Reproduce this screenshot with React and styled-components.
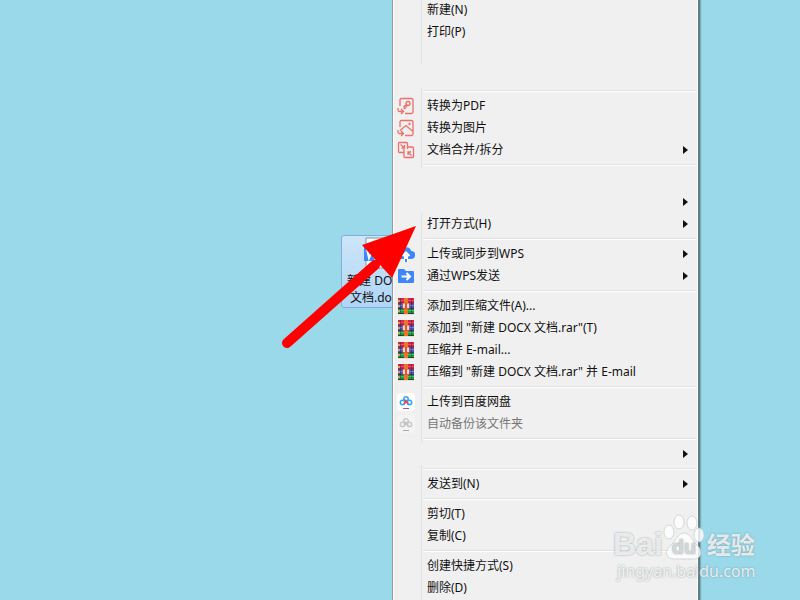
import React from 'react';
import styled, { createGlobalStyle } from 'styled-components';

const GlobalStyle = createGlobalStyle`
  body {
    margin: 0;
    font-family: 'Noto Sans', 'Noto Sans CJK SC', sans-serif;
    font-size: 12px;
    color: #111;
  }
`;
const Desktop = styled.main`
  position: relative;
  height: 100vh;
  overflow: hidden;
  background: #99d9ea;
`;
const DesktopFile = styled.button`
  position: absolute;
  left: 341px;
  top: 235px;
  width: 72px;
  display: flex;
  flex-direction: column;
  align-items: center;
  gap: 3px;
  padding: 1px 0;
  border: 1px solid #84acdd;
  border-radius: 3px;
  background: linear-gradient(#cde6f9, #b0d5f6);
  font: inherit;
  line-height: 17px;
  white-space: nowrap;
  color: #111;
`;
const Menu = styled.ul`
  position: absolute;
  left: 392px;
  top: -1px;
  width: 304px;
  margin: 0;
  padding: 0;
  list-style: none;
  background: #f0f0f0;
  border-left: 1px solid #979c9e;
  border-right: 1px solid #fff;
  box-shadow: inset 1px 0 0 #fafafa, 2px 0 0 #5f7f86, 3px 0 1px #7fa9b3;
`;
const Gutter = styled.span`
  flex: none;
  display: flex;
  align-items: center;
  width: 29px;
  padding-left: 4px;
  box-sizing: border-box;
  border-right: 1px solid ${props => (props.$plain ? 'transparent' : '#e2e3e3')};
`;
const Row = styled.button`
  display: flex;
  width: 100%;
  height: 22px;
  padding: 0;
  border: 0;
  background: none;
  font: inherit;
  line-height: 22px;
  text-align: left;
  color: ${props => (props.disabled ? '#777' : '#111')};
`;
const Label = styled.span`
  flex: 1;
  padding-left: 5px;
  white-space: nowrap;
`;
const Submenu = styled.svg`
  flex: none;
  align-self: center;
  width: 5px;
  height: 8px;
  margin-right: 9px;
`;
const Divider = styled.li`
  display: flex;
  height: 8px;
`;
const DividerLine = styled.span`
  flex: 1;
  align-self: center;
  height: 1px;
  margin: 0 1px;
  border-top: 1px solid #e0e0e0;
  background: #fff;
`;
const Icon = styled.svg`
  width: 18px;
  height: 18px;
`;
const Pointer = styled.svg`
  position: absolute;
  left: 270px;
  top: 210px;
`;
const Watermark = styled.div`
  position: absolute;
  left: 613px;
  top: 512px;
  color: rgba(255, 255, 255, 0.8);
  font-family: 'Liberation Sans', 'Noto Sans CJK SC', sans-serif;
  text-shadow: 0 0 2px rgba(120, 130, 135, 0.8);
`;
const Brand = styled.div`
  display: flex;
  align-items: flex-end;
  font-size: 32px;
  font-weight: bold;
  line-height: 32px;
`;
const Paw = styled.svg`
  width: 42px;
  height: 48px;
  overflow: visible;
`;
const BrandChinese = styled.span`
  font-size: 24px;
  line-height: 28px;
  padding-left: 2px;
`;
const Site = styled.div`
  padding-left: 4px;
  font-family: 'Noto Sans', sans-serif;
  font-size: 16px;
  line-height: 22px;
`;

const redLine = { fill: 'none', stroke: '#ee6f6a', strokeWidth: 1.3 };

const PdfIcon = () => (
  <Icon viewBox="0 0 18 18" {...redLine}>
    <path d="M3 9V3q0-1.500 1.500-1.500h10q1.500 0 1.500 1.500v12q0 1.500-1.500 1.500H8M1 11v2q0 1.500 1.500 1.500H6M4 12 6.500 14.500 4 17" />
    <circle cx="11" cy="6.500" r="2" />
    <path d="M9.500 8 9 10.500q-1 1.500-2 .5-.5-2 1.500-2.500l3-.2" />
  </Icon>
);
const ImageIcon = () => (
  <Icon viewBox="0 0 18 18" {...redLine}>
    <path d="M3 8V3q0-1.500 1.500-1.500h10q1.500 0 1.500 1.500v12q0 1.500-1.500 1.500H8M1 11v2q0 1.500 1.500 1.500H6M4 12 6.500 14.500 4 17M3 11.500 9 6.500l7 6" />
    <circle cx="12.500" cy="5" r=".5" />
  </Icon>
);
const MergeIcon = () => (
  <Icon viewBox="0 0 18 18" {...redLine}>
    <path d="M7 11.500H2.500Q1.500 11.500 1.500 10.500V2.500q0-1 1-1H9.500q1 0 1 1V6M10.500 6h5q1 0 1 1v8.500q0 1-1 1H8q-1 0-1-1V8M10.500 6V8M3.500 3.500l3.500 3M7.500 4v3H4.500M14.500 14.500l-3.500-3M11 14v-3h3" />
  </Icon>
);
const CloudIcon = () => (
  <Icon viewBox="0 0 18 18">
    <path d="M5 14a4.300 4.300 0 0 1-.8-8.500 5.300 5.300 0 0 1 10 .5A4 4 0 0 1 14 14z" fill="#3f86f7" />
    <path d="M9 17V8.500" stroke="#fff" strokeWidth="4" />
    <path d="M9 17V8" stroke="#3f86f7" strokeWidth="2" />
    <path d="M9 14V8M5.500 11 9 7.500l3.500 3.500" fill="none" stroke="#fff" strokeWidth="2" />
  </Icon>
);
const SendIcon = () => (
  <Icon viewBox="0 0 18 18">
    <path d="M1 3q0-1 1-1h5l2 2h7q1 0 1 1v10q0 1-1 1H2q-1 0-1-1z" fill="#3f86f7" />
    <path d="M4.500 9.500H13M9.500 6l3.500 3.500L9.500 13" fill="none" stroke="#fff" strokeWidth="2" />
  </Icon>
);
const RarIcon = () => (
  <Icon viewBox="0 0 18 18">
    <path d="M1 1h16v5.500H1z" fill="#d3234f" />
    <path d="M1 6.500h16V12H1z" fill="#4c4fc0" />
    <path d="M1 12h16v5H1z" fill="#17a03e" />
    <path d="M1 3.500h16" stroke="#ef4a6c" />
    <path d="M1 8.500h16" stroke="#7e80dc" />
    <path d="M1 13.500h16" stroke="#3fc45f" />
    <path d="M1 6.200h16M1 11.700h16M1 16.600h16" stroke="#35202f" strokeWidth=".8" />
    <path d="M3.500 1v16M14.500 1v16" stroke="#302030" strokeOpacity=".4" />
    <path d="M1 4h2M1 9h2M1 14h2" stroke="#d8a545" strokeWidth="2" />
    <path d="M7 1h4v16H7z" fill="#ef7423" />
    <path d="M5.500 6h7v6h-7z" fill="#d6583f" />
    <path d="M7 6.500V11M11 6.500V11" stroke="#fff" strokeWidth="1.500" />
  </Icon>
);
const NetdiskIcon = ({ gray }) => (
  <Icon viewBox="0 0 18 18">
    <rect width="18" height="18" rx="4" fill={gray ? '#f4f4f4' : '#fff'} />
    <g fill="none" strokeWidth="1.500">
      <circle cx="9" cy="6" r="2.200" stroke={gray ? '#c8c8c8' : '#28a8f5'} />
      <circle cx="5.500" cy="9.500" r="2.200" stroke={gray ? '#c8c8c8' : '#28a8f5'} />
      <circle cx="12.500" cy="9.500" r="2.200" stroke={gray ? '#c8c8c8' : '#28a8f5'} />
      <path d="m7.500 6.500 4 4.500M10 7.500 7 11" stroke={gray ? '#c4c4c4' : '#ef4261'} />
    </g>
    <path d="M6 15.500h3" stroke={gray ? '#aaa' : '#ef4261'} />
    <path d="M9 15.500h3" stroke={gray ? '#aaa' : '#2878f5'} />
  </Icon>
);

const items = [
  { label: '新建(N)' },
  { label: '打印(P)' },
  { label: '' },
  { label: '', plain: true },
  { divider: true },
  { label: '转换为PDF', icon: <PdfIcon /> },
  { label: '转换为图片', icon: <ImageIcon /> },
  { label: '文档合并/拆分', icon: <MergeIcon />, submenu: true },
  { divider: true },
  { label: '', plain: true },
  { label: '', plain: true, submenu: true },
  { label: '打开方式(H)', submenu: true },
  { divider: true },
  { label: '上传或同步到WPS', icon: <CloudIcon />, submenu: true },
  { label: '通过WPS发送', icon: <SendIcon />, submenu: true },
  { divider: true },
  { label: '添加到压缩文件(A)...', icon: <RarIcon /> },
  { label: '添加到 "新建 DOCX 文档.rar"(T)', icon: <RarIcon /> },
  { label: '压缩并 E-mail...', icon: <RarIcon /> },
  { label: '压缩到 "新建 DOCX 文档.rar" 并 E-mail', icon: <RarIcon /> },
  { divider: true },
  { label: '上传到百度网盘', icon: <NetdiskIcon /> },
  { label: '自动备份该文件夹', icon: <NetdiskIcon gray />, disabled: true },
  { divider: true },
  { label: '', plain: true, submenu: true },
  { divider: true },
  { label: '发送到(N)', submenu: true },
  { divider: true },
  { label: '剪切(T)' },
  { label: '复制(C)' },
  { divider: true },
  { label: '创建快捷方式(S)' },
  { label: '删除(D)' },
  { label: '' },
];

const MenuItem = ({ item }) => {
  if (item.divider) {
    return (
      <Divider>
        <Gutter />
        <DividerLine />
      </Divider>
    );
  }
  return (
    <li>
      <Row type="button" disabled={item.disabled}>
        <Gutter $plain={item.plain}>{item.icon}</Gutter>
        <Label>{item.label}</Label>
        {item.submenu && (
          <Submenu viewBox="0 0 5 8">
            <path d="M0 0 5 4 0 8z" fill="#111" />
          </Submenu>
        )}
      </Row>
    </li>
  );
};

const App = () => (
  <Desktop>
    <GlobalStyle />
    <DesktopFile type="button">
      <svg width="32" height="32" viewBox="0 0 32 32">
        <path d="M5 1h20l5 5v25H5z" fill="#f7fafc" stroke="#8b9399" />
        <path d="M3 9h16v15H3z" fill="#3f86f7" />
        <path d="m6 12 2 9 3-7 3 7 2-9" fill="none" stroke="#fff" strokeWidth="2" />
      </svg>
      <span>新建 DOCX<br />文档.docx</span>
    </DesktopFile>
    <Menu>
      {items.map((item, i) => <MenuItem key={i} item={item} />)}
    </Menu>
    <Pointer width="150" height="145" viewBox="0 0 150 145">
      <path d="M17 133 105 55" stroke="#f00" strokeWidth="10" strokeLinecap="round" />
      <path d="M146 16 122 68 92 35z" fill="#f00" />
    </Pointer>
    <Watermark>
      <Brand>
        <span>Bai</span>
        <Paw viewBox="0 0 42 48">
          <g fill="#fff" fillOpacity=".8" stroke="#c4cacc" strokeOpacity=".7">
            <ellipse cx="6" cy="20" rx="5" ry="7" />
            <ellipse cx="16" cy="10" rx="5" ry="7" />
            <ellipse cx="29" cy="11" rx="5" ry="7" />
            <ellipse cx="36" cy="23" rx="5" ry="7" />
            <path d="M21 21c6 0 8 7 13 12 7 7 4 14-4 14H12C3 47 1 40 7 34c6-5 8-13 14-13z" />
          </g>
          <text x="21" y="42" textAnchor="middle" fontSize="20" fill="#d3d7d8">du</text>
        </Paw>
        <BrandChinese>经验</BrandChinese>
      </Brand>
      <Site>jingyan.baidu.com</Site>
    </Watermark>
  </Desktop>
);

export default App;
